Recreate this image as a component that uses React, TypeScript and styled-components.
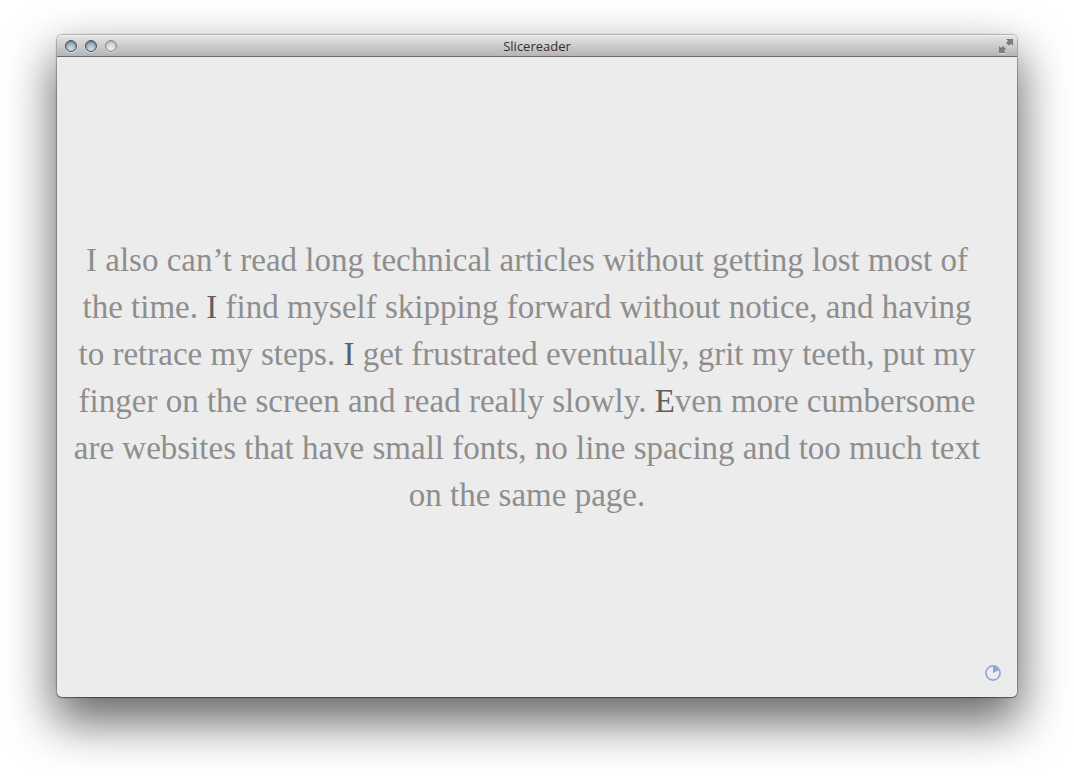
import React from "react";
import styled, { createGlobalStyle } from "styled-components";

const GlobalStyle = createGlobalStyle`
  * { box-sizing: border-box; }
  body { margin: 0; background: #ffffff; }
`;

const Desktop = styled.div`
  display: flex;
  min-height: 100vh;
  padding: 35px 57px 79px;
`;

const Window = styled.main`
  flex: 1;
  display: flex;
  flex-direction: column;
  border-radius: 5px;
  background: #ececec;
  box-shadow:
    0 0 1px 1px rgba(0, 0, 0, 0.25),
    0 1px 1px rgba(0, 0, 0, 0.3),
    0 22px 48px 3px rgba(0, 0, 0, 0.6);
`;

const TitleBar = styled.header`
  display: grid;
  grid-template-columns: 1fr auto 1fr;
  align-items: center;
  height: 22px;
  padding: 0 4px;
  border-bottom: 1px solid #686868;
  border-radius: 5px 5px 0 0;
  background: linear-gradient(#e6e6e6, #b4b4b4);
  box-shadow: inset 0 1px 0 #f2f2f2;
`;

const Title = styled.h1`
  margin: 0;
  font: 500 13px/20px "Open Sans", "Noto Sans", sans-serif;
  color: #303030;
`;

const Controls = styled.div`
  display: flex;
  gap: 8px;
  padding-left: 4px;
`;

const Light = styled.button<{ $idle?: boolean }>`
  width: 12px;
  height: 12px;
  padding: 0;
  border: 1px solid ${(p) => (p.$idle ? "#858585" : "#4a5560")};
  border-radius: 50%;
  background: ${(p) =>
    p.$idle
      ? "radial-gradient(circle at 50% 75%, #ededed, #cbcbcb 75%)"
      : "radial-gradient(circle at 50% 80%, #cfe0ea, #8b9fae 75%)"};
  box-shadow:
    inset 0 1px 1px ${(p) => (p.$idle ? "#aaaaaa" : "#61717f")},
    0 1px 0 rgba(255, 255, 255, 0.5);
`;

const ExpandButton = styled.button`
  justify-self: end;
  display: flex;
  padding: 0;
  border: 0;
  background: none;
`;

const Reader = styled.article`
  flex: 1;
  display: grid;
  grid-template-rows: 1fr auto 1fr;
  padding: 0 16px;
`;

const Passage = styled.p`
  grid-row: 2;
  margin: 0;
  padding: 2px 20px 0 0;
  font: 400 33px/47px "Liberation Serif", serif;
  text-align: center;
  color: #8e8e8e;
`;

const Initial = styled.span`
  color: #606060;
`;

const Progress = styled.svg`
  grid-row: 3;
  align-self: end;
  justify-self: end;
  margin-bottom: 16px;
`;

export default function App() {
  return (
    <Desktop>
      <GlobalStyle />
      <Window>
        <TitleBar>
          <Controls>
            <Light type="button" aria-label="Close" />
            <Light type="button" aria-label="Minimize" />
            <Light type="button" aria-label="Zoom" $idle />
          </Controls>
          <Title>Slicereader</Title>
          <ExpandButton type="button" aria-label="Full screen">
            <svg width="14" height="16" viewBox="0 -1 14 16">
              <g fill="#ffffff" opacity="0.5" transform="translate(0 1)">
                <path d="M7 0h7v7l-2-2-2 2-3-3 2-2z" />
                <path d="M7 14H0V7l2 2 2-2 3 3-2 2z" />
              </g>
              <g fill="#7c7c7c">
                <path d="M7 0h7v7l-2-2-2 2-3-3 2-2z" />
                <path d="M7 14H0V7l2 2 2-2 3 3-2 2z" />
              </g>
            </svg>
          </ExpandButton>
        </TitleBar>
        <Reader>
          <Passage>
            I also can’t read long technical articles without getting lost most of the time.{" "}
            <Initial>I</Initial> find myself skipping forward without notice, and having to
            retrace my steps. <Initial>I</Initial> get frustrated eventually, grit my teeth, put
            my finger on the screen and read really slowly. <Initial>E</Initial>ven more
            cumbersome are websites that have small fonts, no line spacing and too much text on
            the same page.
          </Passage>
          <Progress width="16" height="16" viewBox="0 0 16 16" role="img" aria-label="Progress">
            <circle cx="8" cy="8" r="7.100" fill="none" stroke="#8ea8d3" strokeWidth="1.700" />
            <path d="M8 8V1a7 7 0 0 1 6.300 4z" fill="#8ea8d3" />
          </Progress>
        </Reader>
      </Window>
    </Desktop>
  );
}
